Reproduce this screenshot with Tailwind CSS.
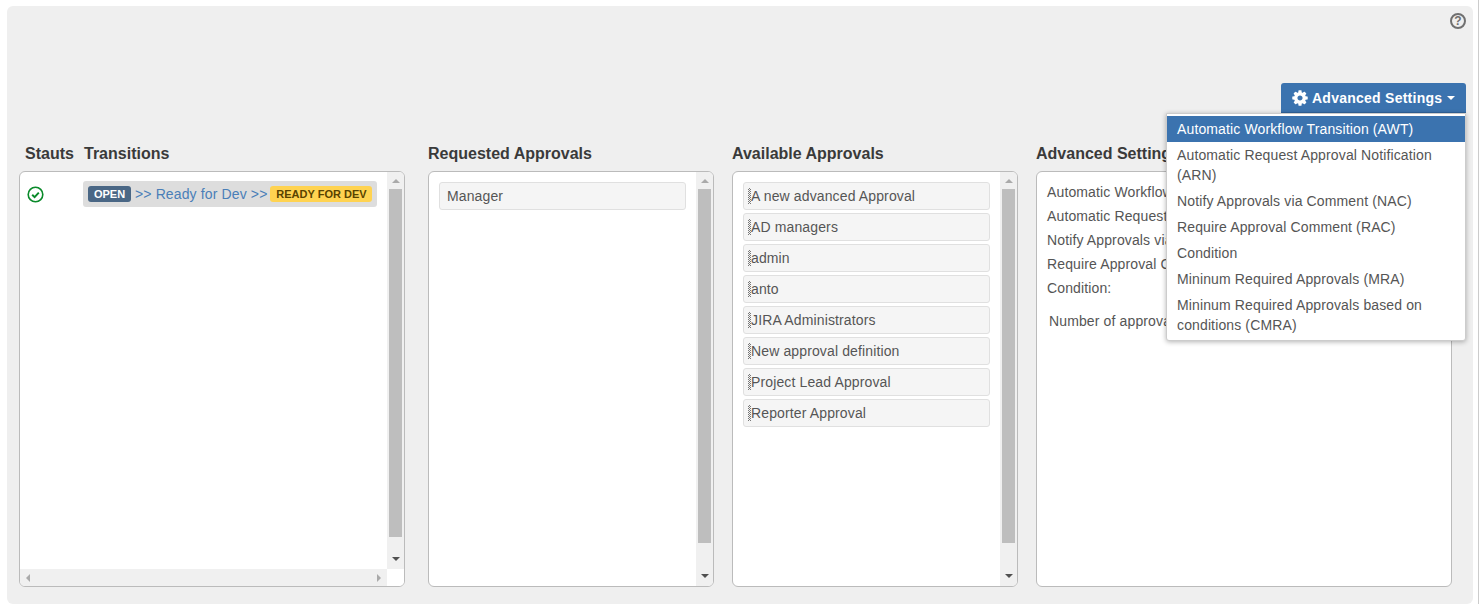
<!DOCTYPE html>
<html lang="en">
<head>
    <meta charset="UTF-8">
    <title>Approvals</title>
    <script src="https://cdn.jsdelivr.net/npm/@tailwindcss/browser@4"></script>
</head>
<body class="bg-white border-r border-[#ccc] font-['Liberation_Sans',Arial,sans-serif] text-[14px] leading-5 tracking-[0.13px] text-[#555] overflow-hidden">
    <div class="relative ml-[7px] mt-[6px] w-[1466px] h-[598px] bg-[#efefef] rounded-[6px] pl-3 pr-[21px] pt-[7px]">
        <!-- help -->
        <div class="flex justify-end -mr-[14px] h-4">
            <span class="flex items-center justify-center w-4 h-4 rounded-full border-2 border-[#707070] text-[12px] font-bold text-[#707070]">?</span>
        </div>

        <!-- button row -->
        <div class="flex justify-end mt-[54px] -mr-[14px]">
            <button class="flex items-center h-[30px] w-[185px] pl-[10px] bg-[#3b73af] border-b border-[#30659d] rounded-t-[3px] text-white font-bold tracking-[0.25px]">
                <svg class="w-[18px] h-[18px] mr-[3px]" viewBox="0 0 1792 1792" fill="currentColor"><path d="M1152 896q0-106-75-181t-181-75-181 75-75 181 75 181 181 75 181-75 75-181zm512-109v222q0 12-8 23t-20 13l-185 28q-19 54-39 91 35 50 107 138 10 12 10 25t-9 23q-27 37-99 108t-94 71q-12 0-26-9l-138-108q-44 23-91 38-16 136-29 186-7 28-36 28h-222q-14 0-24.5-8.5t-11.5-21.5l-28-184q-49-16-90-37l-141 107q-10 9-25 9-14 0-25-11-126-114-165-168-7-10-7-23 0-12 8-23 15-21 51-66.5t54-70.5q-27-50-41-99l-183-27q-13-2-21-12.5t-8-23.5v-222q0-12 8-23t19-13l186-28q14-46 39-92-40-57-107-138-10-12-10-24 0-10 9-23 26-36 98.5-107.5t94.5-71.5q13 0 26 10l138 107q44-23 91-38 16-136 29-186 7-28 36-28h222q14 0 24.5 8.5t11.5 21.5l28 184q49 16 90 37l142-107q9-9 24-9 13 0 25 10 129 119 165 170 7 8 7 22 0 12-8 23-15 21-51 66.5t-54 70.5q26 50 41 98l183 28q13 2 21 12.5t8 23.5z"/></svg>
                Advanced Settings
                <span class="ml-[5px] mt-[1px] border-x-[4px] border-t-[4px] border-x-transparent border-t-white"></span>
            </button>
        </div>

        <!-- columns -->
        <div class="flex mt-[31px]">
            <!-- status / transitions -->
            <div class="w-[386px] mr-[23px]">
                <div class="flex h-[20px] mb-[7px] pl-[6px] text-[16px] font-bold text-[#3a3a3a] tracking-normal">
                    <span class="w-[59px]">Stauts</span>
                    <span>Transitions</span>
                </div>
                <div class="flex flex-col h-[416px] border border-[#bbb] rounded-[6px] bg-white overflow-hidden">
                    <div class="flex flex-1 min-h-0">
                        <div class="flex flex-1 pt-[9px]">
                            <div class="w-[63px] pl-[7px] pt-[5px]">
                                <svg class="w-[17px] h-[17px]" viewBox="0 0 17 17" fill="none" stroke="#0a8a2a"><circle cx="8.5" cy="8.5" r="7.3" stroke-width="1.6"/><path d="M5.2 8.7l2.4 2.4 4.2-4.5" stroke-width="2"/></svg>
                            </div>
                            <div class="flex items-center h-[26px] w-[294px] pl-[5px] bg-[#ddd] rounded-[3px] text-[#4a7fb8]">
                                <span class="flex items-center justify-center w-[43px] h-4 rounded-[3px] bg-[#4a6785] text-white text-[11px] font-bold tracking-normal">OPEN</span>
                                <span class="ml-1 whitespace-nowrap">&gt;&gt; Ready for Dev &gt;&gt;</span>
                                <span class="flex items-center justify-center ml-[3px] w-[102px] h-4 rounded-[3px] bg-[#ffd351] text-[#594300] text-[11px] font-bold tracking-normal whitespace-nowrap">READY FOR DEV</span>
                            </div>
                        </div>
                        <div class="flex flex-col items-center w-[17px] bg-[#f0f0f0] py-[7px]">
                            <span class="border-x-[4px] border-b-[4px] border-x-transparent border-b-[#aaa]"></span>
                            <span class="w-[13px] h-[348px] mt-[6px] bg-[#bebebe]"></span>
                            <span class="mt-auto mb-[1px] border-x-[4px] border-t-[4px] border-x-transparent border-t-[#505050]"></span>
                        </div>
                    </div>
                    <div class="flex h-[17px]">
                        <div class="flex flex-1 items-center justify-between px-[6px] bg-[#f0f0f0]">
                            <span class="border-y-[4px] border-r-[4px] border-y-transparent border-r-[#aaa]"></span>
                            <span class="border-y-[4px] border-l-[4px] border-y-transparent border-l-[#aaa]"></span>
                        </div>
                        <div class="w-[17px] bg-white"></div>
                    </div>
                </div>
            </div>

            <!-- requested -->
            <div class="w-[286px] mr-[18px]">
                <div class="h-[20px] mb-[7px] text-[16px] font-bold text-[#3a3a3a] tracking-normal">Requested Approvals</div>
                <div class="flex h-[416px] border border-[#bbb] rounded-[6px] bg-white overflow-hidden">
                    <div class="flex-1 pt-[10px] pl-[10px] pr-[10px]">
                        <div class="flex items-center h-7 pl-[7px] bg-[#f5f5f5] border border-[#e0e0e0] rounded-[3px]">Manager</div>
                    </div>
                    <div class="flex flex-col items-center w-[17px] bg-[#f0f0f0] py-[7px]">
                        <span class="border-x-[4px] border-b-[4px] border-x-transparent border-b-[#aaa]"></span>
                        <span class="w-[13px] h-[354px] mt-[6px] bg-[#bebebe]"></span>
                        <span class="mt-auto mb-[1px] border-x-[4px] border-t-[4px] border-x-transparent border-t-[#505050]"></span>
                    </div>
                </div>
            </div>

            <!-- available -->
            <div class="w-[286px] mr-[18px]">
                <div class="h-[20px] mb-[7px] text-[16px] font-bold text-[#3a3a3a] tracking-normal">Available Approvals</div>
                <div class="flex h-[416px] border border-[#bbb] rounded-[6px] bg-white overflow-hidden">
                    <div class="flex-1 flex flex-col gap-[3px] pt-[10px] pl-[10px] pr-[10px]">
                        <div class="flex items-center h-7 pl-[4px] bg-[#f5f5f5] border border-[#e0e0e0] rounded-[3px]"><span class="w-[3px] h-4 bg-[conic-gradient(#777_25%,transparent_0_50%,#777_0_75%,transparent_0)] bg-[length:2px_2px]"></span>A new advanced Approval</div>
                        <div class="flex items-center h-7 pl-[4px] bg-[#f5f5f5] border border-[#e0e0e0] rounded-[3px]"><span class="w-[3px] h-4 bg-[conic-gradient(#777_25%,transparent_0_50%,#777_0_75%,transparent_0)] bg-[length:2px_2px]"></span>AD managers</div>
                        <div class="flex items-center h-7 pl-[4px] bg-[#f5f5f5] border border-[#e0e0e0] rounded-[3px]"><span class="w-[3px] h-4 bg-[conic-gradient(#777_25%,transparent_0_50%,#777_0_75%,transparent_0)] bg-[length:2px_2px]"></span>admin</div>
                        <div class="flex items-center h-7 pl-[4px] bg-[#f5f5f5] border border-[#e0e0e0] rounded-[3px]"><span class="w-[3px] h-4 bg-[conic-gradient(#777_25%,transparent_0_50%,#777_0_75%,transparent_0)] bg-[length:2px_2px]"></span>anto</div>
                        <div class="flex items-center h-7 pl-[4px] bg-[#f5f5f5] border border-[#e0e0e0] rounded-[3px]"><span class="w-[3px] h-4 bg-[conic-gradient(#777_25%,transparent_0_50%,#777_0_75%,transparent_0)] bg-[length:2px_2px]"></span>JIRA Administrators</div>
                        <div class="flex items-center h-7 pl-[4px] bg-[#f5f5f5] border border-[#e0e0e0] rounded-[3px]"><span class="w-[3px] h-4 bg-[conic-gradient(#777_25%,transparent_0_50%,#777_0_75%,transparent_0)] bg-[length:2px_2px]"></span>New approval definition</div>
                        <div class="flex items-center h-7 pl-[4px] bg-[#f5f5f5] border border-[#e0e0e0] rounded-[3px]"><span class="w-[3px] h-4 bg-[conic-gradient(#777_25%,transparent_0_50%,#777_0_75%,transparent_0)] bg-[length:2px_2px]"></span>Project Lead Approval</div>
                        <div class="flex items-center h-7 pl-[4px] bg-[#f5f5f5] border border-[#e0e0e0] rounded-[3px]"><span class="w-[3px] h-4 bg-[conic-gradient(#777_25%,transparent_0_50%,#777_0_75%,transparent_0)] bg-[length:2px_2px]"></span>Reporter Approval</div>
                    </div>
                    <div class="flex flex-col items-center w-[17px] bg-[#f0f0f0] py-[7px]">
                        <span class="border-x-[4px] border-b-[4px] border-x-transparent border-b-[#aaa]"></span>
                        <span class="w-[13px] h-[354px] mt-[6px] bg-[#bebebe]"></span>
                        <span class="mt-auto mb-[1px] border-x-[4px] border-t-[4px] border-x-transparent border-t-[#505050]"></span>
                    </div>
                </div>
            </div>

            <!-- advanced settings -->
            <div class="w-[416px]">
                <div class="h-[20px] mb-[7px] text-[16px] font-bold text-[#3a3a3a] tracking-normal whitespace-nowrap">Advanced Settings</div>
                <div class="h-[416px] border border-[#bbb] rounded-[6px] bg-white pl-[10px] pt-[10px]">
                    <div class="flex flex-col gap-1">
                        <div>Automatic Workflow Transition:</div>
                        <div>Automatic Request Approval:</div>
                        <div>Notify Approvals via Comment:</div>
                        <div>Require Approval Comment:</div>
                        <div>Condition:</div>
                    </div>
                    <div class="mt-[13px] ml-[2px]">Number of approvals required:</div>
                </div>
            </div>
        </div>

        <!-- dropdown -->
        <ul class="absolute left-[1159px] top-[107px] w-[300px] py-[2px] bg-white border border-[#ccc] rounded-b-[3px] shadow-[0_1px_5px_rgba(0,0,0,0.3)]">
            <li class="px-[10px] py-[3px] bg-[#3b73af] text-white">Automatic Workflow Transition (AWT)</li>
            <li class="px-[10px] py-[3px]">Automatic Request Approval Notification (ARN)</li>
            <li class="px-[10px] py-[3px]">Notify Approvals via Comment (NAC)</li>
            <li class="px-[10px] py-[3px]">Require Approval Comment (RAC)</li>
            <li class="px-[10px] py-[3px]">Condition</li>
            <li class="px-[10px] py-[3px]">Mininum Required Approvals (MRA)</li>
            <li class="px-[10px] py-[3px]">Mininum Required Approvals based on conditions (CMRA)</li>
        </ul>
    </div>
</body>
</html>
